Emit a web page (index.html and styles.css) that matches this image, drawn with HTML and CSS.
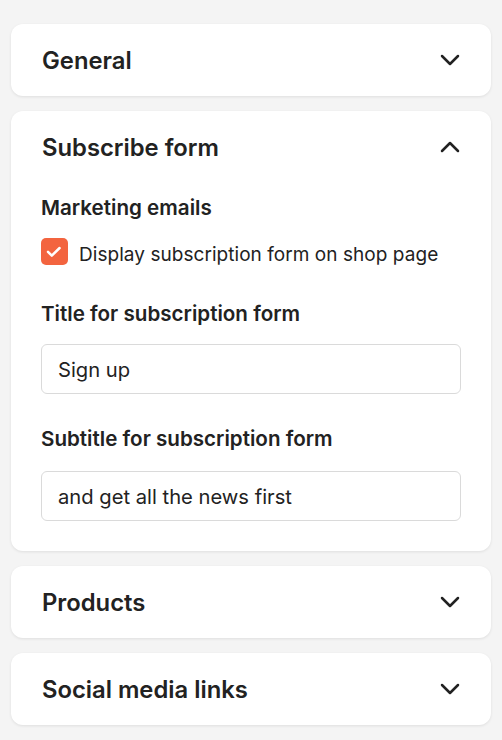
FILE: index.html
```html
<!DOCTYPE html>
<html lang="en">
<head>
<meta charset="utf-8">
<title>Shop settings</title>
<link rel="stylesheet" href="styles.css">
</head>
<body>
<main class="panel">
  <section class="card">
    <header class="card-head">
      <h2 class="card-title">General</h2>
      <svg class="chev" viewBox="0 0 20 12" width="20" height="12"><path d="M2 2 L10 10 L18 2"/></svg>
    </header>
  </section>

  <section class="card">
    <header class="card-head">
      <h2 class="card-title">Subscribe form</h2>
      <svg class="chev" viewBox="0 0 20 12" width="20" height="12"><path d="M2 10 L10 2 L18 10"/></svg>
    </header>
    <div class="card-body">
      <div class="field-label">Marketing emails</div>
      <label class="check-row">
        <span class="checkbox"><svg viewBox="0 0 27 27" width="27" height="27"><path d="M7 13.8 L10.8 17.6 L18.6 10"/></svg></span>
        <span class="check-text">Display subscription form on shop page</span>
      </label>
      <div class="field-label gap-title">Title for subscription form</div>
      <div class="input input-title">Sign up</div>
      <div class="field-label gap-subtitle">Subtitle for subscription form</div>
      <div class="input input-subtitle">and get all the news first</div>
    </div>
  </section>

  <section class="card">
    <header class="card-head">
      <h2 class="card-title">Products</h2>
      <svg class="chev" viewBox="0 0 20 12" width="20" height="12"><path d="M2 2 L10 10 L18 2"/></svg>
    </header>
  </section>

  <section class="card">
    <header class="card-head">
      <h2 class="card-title">Social media links</h2>
      <svg class="chev" viewBox="0 0 20 12" width="20" height="12"><path d="M2 2 L10 10 L18 2"/></svg>
    </header>
  </section>
</main>
</body>
</html>
```

FILE: styles.css
```css
html, body {
  margin: 0;
  padding: 0;
  background: #f4f4f4;
}
body {
  font-family: Inter, "Noto Sans", "Liberation Sans", sans-serif;
  color: #222222;
}
.panel {
  display: flex;
  flex-direction: column;
  gap: 15px;
  padding: 24px 11px 14px;
}
.card {
  background: #ffffff;
  border-radius: 12px;
  box-shadow: 0 1px 3px rgba(0, 0, 0, 0.09);
}
.card-head {
  height: 72px;
  box-sizing: border-box;
  display: flex;
  align-items: center;
  justify-content: space-between;
  padding: 2px 31px 0 31px;
}
.card-title {
  margin: 0;
  font-size: 23.8px;
  line-height: 28px;
  font-weight: 600;
}
.chev {
  display: block;
  fill: none;
  stroke: #222222;
  stroke-width: 2.5;
  stroke-linecap: round;
  stroke-linejoin: round;
  margin-top: -2px;
}
.card-body {
  padding: 13px 30px 30px 30px;
}
.field-label {
  font-size: 20.6px;
  line-height: 24px;
  font-weight: 600;
}
.gap-title { margin-top: 37px; }
.gap-subtitle { margin-top: 33px; }
.check-row {
  display: flex;
  align-items: center;
  gap: 11px;
  margin-top: 18px;
}
.checkbox {
  width: 27px;
  height: 27px;
  border-radius: 5px;
  background: #f3643f;
  flex: none;
}
.checkbox svg {
  display: block;
  fill: none;
  stroke: #ffffff;
  stroke-width: 2.5;
  stroke-linecap: round;
  stroke-linejoin: round;
}
.check-text {
  font-size: 19px;
  line-height: 24px;
  letter-spacing: 0.05px;
  padding-top: 3.5px;
  margin-bottom: -3.5px;
}
.input {
  height: 48px;
  border: 1px solid #dadada;
  border-radius: 6px;
  padding: 0 16px;
  display: flex;
  align-items: center;
  font-size: 20.2px;
}
.input-title { margin-top: 18px; }
.input-subtitle { margin-top: 20px; }
```
